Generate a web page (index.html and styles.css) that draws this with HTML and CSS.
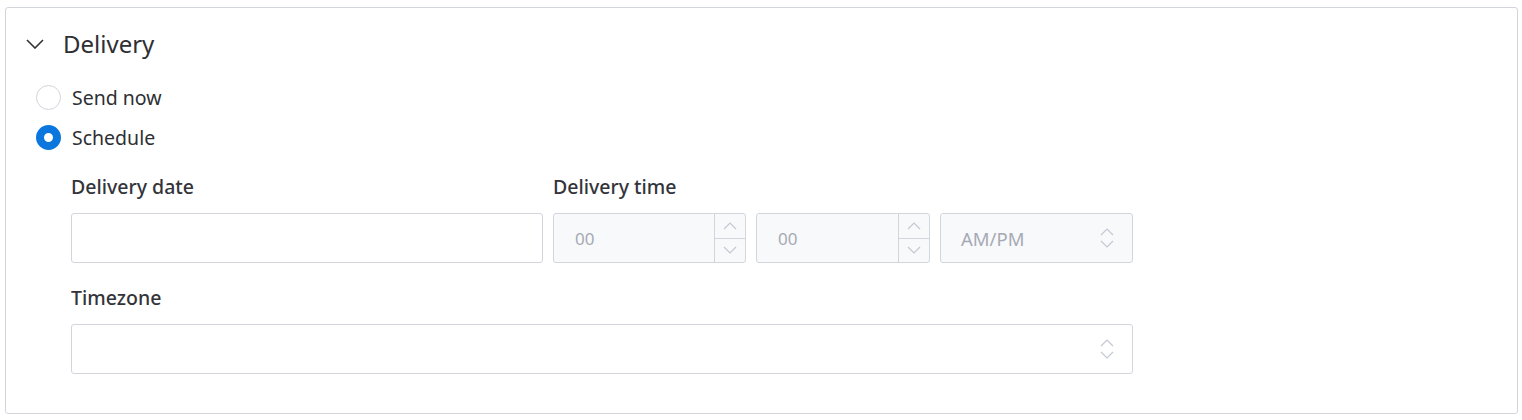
FILE: index.html
```html
<!DOCTYPE html>
<html>
<head>
<meta charset="utf-8">
<link rel="stylesheet" href="styles.css">
</head>
<body>
<section class="panel">
  <div class="panel-head">
    <svg class="chev" width="18" height="10" viewBox="0 0 18 10"><path d="M1 1 L9 9 L17 1" fill="none" stroke="#333" stroke-width="1.6"/></svg>
    <h2 class="title">Delivery</h2>
  </div>
  <div class="radios">
    <label class="radio"><span class="dot"></span><span>Send now</span></label>
    <label class="radio"><span class="dot checked"></span><span>Schedule</span></label>
  </div>
  <div class="fields">
    <div class="row">
      <div class="field date">
        <div class="label">Delivery date</div>
        <div class="input"></div>
      </div>
      <div class="field time">
        <div class="label">Delivery time</div>
        <div class="time-row">
          <div class="input disabled num w1"><span class="ph">00</span>
            <div class="step"><span class="up"><svg width="14" height="8" viewBox="0 0 14 8"><path d="M1 7 L7 1 L13 7" fill="none" stroke="#c4c8d2" stroke-width="1.2"/></svg></span><span class="down"><svg width="14" height="8" viewBox="0 0 14 8"><path d="M1 1 L7 7 L13 1" fill="none" stroke="#c4c8d2" stroke-width="1.2"/></svg></span></div>
          </div>
          <div class="input disabled num w2"><span class="ph">00</span>
            <div class="step"><span class="up"><svg width="14" height="8" viewBox="0 0 14 8"><path d="M1 7 L7 1 L13 7" fill="none" stroke="#c4c8d2" stroke-width="1.2"/></svg></span><span class="down"><svg width="14" height="8" viewBox="0 0 14 8"><path d="M1 1 L7 7 L13 1" fill="none" stroke="#c4c8d2" stroke-width="1.2"/></svg></span></div>
          </div>
          <div class="input disabled sel w3"><span class="ph am">AM/PM</span>
            <svg class="updown" width="14" height="22" viewBox="0 0 14 22"><path d="M1 8 L7 2 L13 8 M1 14 L7 20 L13 14" fill="none" stroke="#c4c8d2" stroke-width="1.2"/></svg>
          </div>
        </div>
      </div>
    </div>
    <div class="field tz">
      <div class="label">Timezone</div>
      <div class="input sel">
        <span></span>
        <svg class="updown" width="14" height="22" viewBox="0 0 14 22"><path d="M1 8 L7 2 L13 8 M1 14 L7 20 L13 14" fill="none" stroke="#c4c8d2" stroke-width="1.2"/></svg>
      </div>
    </div>
  </div>
</section>
</body>
</html>
```
FILE: styles.css
```css
* { box-sizing: border-box; }
body {
  margin: 0;
  padding: 7px 4px 0 5px;
  font-family: "Noto Sans", "Open Sans", sans-serif;
  color: #2e2f33;
  background: #fff;
}
.panel {
  border: 1px solid #d3d5dd;
  border-radius: 3px;
  height: 407px;
  padding: 20px 0 0 20px;
}
.panel-head {
  display: flex;
  align-items: center;
  gap: 19px;
  height: 31px;
}
.title {
  margin: 0;
  font-size: 24px;
  font-weight: 400;
  color: #2e2f33;
}
.radios {
  display: flex;
  flex-direction: column;
  gap: 15px;
  margin-top: 26px;
  padding-left: 10px;
}
.radio {
  display: flex;
  align-items: center;
  gap: 11px;
  font-size: 19.5px;
  height: 25px;
}
.dot {
  width: 25px;
  height: 25px;
  border-radius: 50%;
  border: 1px solid #d3d5dd;
  background: #fff;
}
.dot.checked {
  border: 8px solid #0b76de;
  background: #fff;
}
.fields {
  padding-left: 45px;
  margin-top: 25px;
}
.row {
  display: flex;
  gap: 10px;
}
.label {
  font-size: 19.5px;
  font-weight: 500;
  height: 24px;
  line-height: 24px;
  margin-bottom: 14px;
  color: #33343a;
}
.input {
  height: 50px;
  border: 1px solid #d3d5dd;
  border-radius: 3px;
  background: #fff;
}
.date .input { width: 472px; }
.time-row {
  display: flex;
  gap: 10px;
}
.disabled { background: #f8f9fb; }
.num {
  display: flex;
  align-items: center;
  justify-content: space-between;
  padding-left: 21px;
}
.ph {
  color: #a6aab4;
  font-size: 17px;
}
.ph.am { font-size: 18.5px; }
.w1 { width: 193px; }
.w2 { width: 174px; }
.w3 { width: 193px; }
.step {
  display: flex;
  flex-direction: column;
  width: 31px;
  height: 100%;
  border-left: 1px solid #d3d5dd;
}
.step span {
  flex: 1;
  display: flex;
  align-items: center;
  justify-content: center;
}
.step .up { border-bottom: 1px solid #d3d5dd; }
.sel {
  display: flex;
  align-items: center;
  justify-content: space-between;
  padding: 0 18px 0 20px;
}
.tz { margin-top: 23px; }
.tz .input { width: 1062px; }
```
